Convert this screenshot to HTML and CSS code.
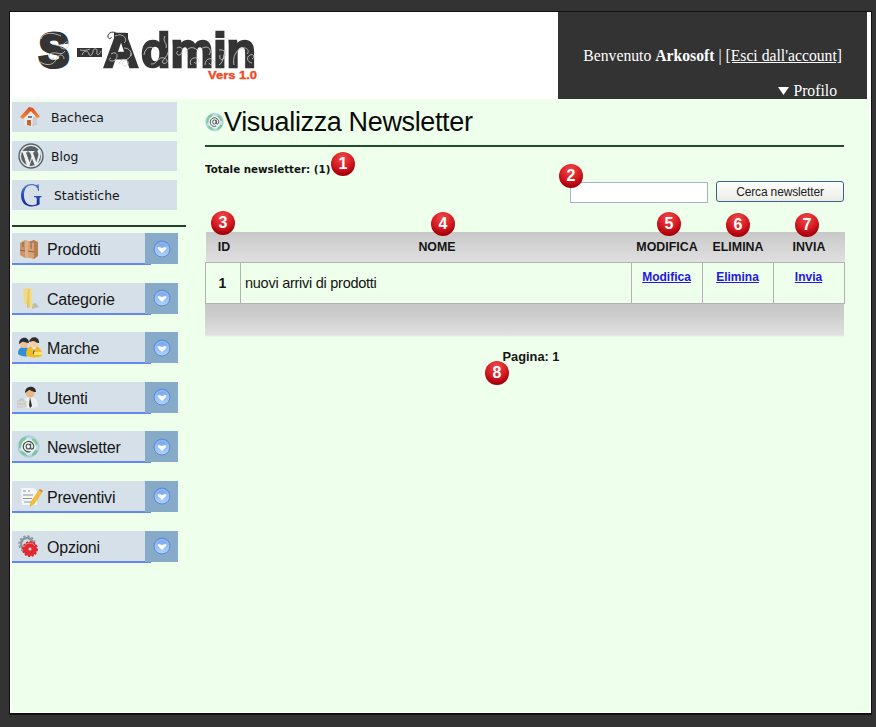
FILE: index.html
```html
<!DOCTYPE html>
<html lang="it">
<head>
<meta charset="utf-8">
<title>S-Admin</title>
<link rel="stylesheet" href="styles.css">
</head>
<body>
<svg width="0" height="0" class="defs" aria-hidden="true">
  <defs>
    <linearGradient id="orb" x1="0" y1="0" x2="0" y2="1"><stop offset="0" stop-color="#6f9ee8"/><stop offset="1" stop-color="#b4d8fa"/></linearGradient>
    <linearGradient id="roof" x1="0" y1="0" x2="0" y2="1"><stop offset="0" stop-color="#d94917"/><stop offset="1" stop-color="#ff8a3a"/></linearGradient>
    <linearGradient id="gold" x1="0" y1="0" x2="1" y2="0"><stop offset="0" stop-color="#d9b550"/><stop offset=".5" stop-color="#f6e290"/><stop offset="1" stop-color="#d9b64c"/></linearGradient>
    <linearGradient id="gblue" x1="0" y1="0" x2="0" y2="1"><stop offset="0" stop-color="#5478cc"/><stop offset="1" stop-color="#0c249c"/></linearGradient>
    <radialGradient id="globe"><stop offset="0" stop-color="#fff"/><stop offset=".55" stop-color="#e2f1f0"/><stop offset="1" stop-color="#a5d0de"/></radialGradient>
    <symbol id="drop" viewBox="0 0 18 18"><circle cx="9" cy="9" r="8" fill="url(#orb)" stroke="#5c8bd2" stroke-width="1"/><circle cx="9" cy="9" r="6.300" fill="none" stroke="#a3c8f5" stroke-width=".8"/><path d="M4.700 7.300h2.200l2.100 1 2.100-1h2.200v1.500L9 13 4.700 8.800z" fill="#fff"/></symbol>
    <symbol id="mail" viewBox="0 0 22 22"><circle cx="11" cy="11" r="10.2" fill="url(#globe)" stroke="#a1c9d8" stroke-width=".7"/><path d="M2 8C3 4 6 2 9 2l-1 3-3 2-1 5-2 1zM15 3c3 1 4 3 5 6l-2 1-2-3-2-2zM3 15l4 1 3 4c-4 0-6-2-7-5zM18 14l2 1c-1 3-3 4-6 5l1-3z" fill="#62b870" opacity=".65"/><circle cx="11" cy="11" r="6.800" fill="#f2f8f6" opacity=".85"/><path d="M13 8.300v4c0 2 3 1.400 3-1.400a5 5 0 1 0-3 4.800M13 11a2.100 2.400 0 1 1-4.200 0 2.100 2.400 0 1 1 4.200 0" fill="none" stroke="#424c4d" stroke-width="1.100"/></symbol>
  </defs>
</svg>
<div class="frame">
  <header class="top">
    <svg class="logo" width="240" height="72" viewBox="28 12 240 72">
      <g class="logo-word">
        <text class="heavy" x="39" y="66.500" textLength="30" lengthAdjust="spacingAndGlyphs">S</text>
        <text x="103.500" y="67" textLength="35" lengthAdjust="spacingAndGlyphs">A</text>
        <text x="141" y="67" textLength="115" lengthAdjust="spacingAndGlyphs">dmin</text>
      </g>
      <path d="M77 48h25v9H77z M114 33h14v6h-14z" fill="#343434"/>
      <g class="swirl">
        <path d="M41 39c2-7 12-7 20-3M40 62c8 5 15 2 16-3M52 44c5 1 9 3 13-1s5 3 2 5-7 0-7-2M54 58c-5 3-7-4-2-5s10 3 13-2M56 60c2-7 8-6 8-1"/>
        <path d="M82 55c2-5 6-5 7-1s4 0 4-3 5-3 4 1 3 3 4-1M80 50c4 1 7 0 10-1"/>
        <path d="M115 36c7-4 14 3 9 7M111 54c6-4 8 3 4 6s-8-1-4-2M119 64c2-8 11-4 9 0s-8 1-5-2 8-3 8-9M124 48c6 0 8 5 7 8"/>
        <path d="M144 55c1-9 9-10 12-4M151 64c6 1 7-8 13-6s2 7-1 5 5-6 5-11M165 36c-3 6 3 7 1 12"/>
        <path d="M177 48c5-3 7 3 4 6s-6-1-3-3M185 53c3-6 8-7 12-3M191 65c-3-6 4-9 7-6s-2 6-4 3M201 49c7-5 12 1 8 6M205 65c0-7 7-8 9-4s-4 5-5 2"/>
        <path d="M219 50c6-1 8 4 5 8s-5 0-4-3M219 65c6-4 3-10 7-14M234 65c-2-8 3-16 8-17s8 3 5 6M252 63c-5-1-6-6-2-8s5 3 2 4"/>
      </g>
      <path class="curl" d="M118 35c-3-5-11-3-10 2 1 3 4 1 3 0"/>
      <text class="logo-version" x="208" y="79" textLength="49" lengthAdjust="spacingAndGlyphs">Vers 1.0</text>
    </svg>
    <div class="account">
      <div class="welcome">Benvenuto <b>Arkosoft</b> | <a href="#">[Esci dall'account]</a></div>
      <div class="profile"><svg width="11" height="8"><path d="M0 0h11L5.500 8z" fill="#fff"/></svg>Profilo</div>
    </div>
  </header>
  <div class="body">
    <nav class="side">
      <a class="quick"><svg width="24" height="24" viewBox="0 0 24 24"><path d="M6 12l6-7 7 7v9l-5 1-7-2z" fill="#e9ebee"/><path d="M15 12l4-1v9l-5 2z" fill="#c9cdd3"/><path d="M2 12 11 2l4 1 7 9-3 1-6-7-8 8z" fill="url(#roof)"/><path d="M9 15h4v6l-4-1z" fill="#c8642e"/><path d="M10 11h4v2h-4z" fill="#75808a"/></svg><span>Bacheca</span></a>
      <a class="quick blog"><svg width="26" height="26" viewBox="0 0 26 26"><circle cx="13" cy="13" r="12" fill="#e1e4e5" stroke="#59646a" stroke-width="1.4"/><circle cx="13" cy="13" r="10" fill="#566167"/><path d="M3.500 8h6v1.200L8 9.400l3.600 10 1.900-5.800-1.500-4-1.500-.3V8h6v1.200l-1.600.3 3.400 9.700 2-6.500c.8-3-1.400-3.300-.8-5 .4-1.200 2-1.200 2.500-.5 2 5-1 9-2.700 14.600L17 23l-3-7.500L11 24l-2-1L4.700 9.400l-1.500-.2z" fill="#eef0f0"/></svg><span>Blog</span></a>
      <a class="quick stats"><svg width="22" height="25" viewBox="0 0 22 25"><path d="M19 8h-.8C17.500 4 15 2.300 11.500 2.300 6.500 2.300 4 6.500 4 12.200c0 6 3 10 8 10 2 0 3.500-.5 4.700-1.300V16c0-1.500-.5-1.900-2.700-2.100v-.9h7.500v.9c-1.600.2-1.900.6-1.900 2v5.300c-2.200 1.300-5 2.200-8 2.200C5 23.400 1 19 1 12.500 1 5.500 5.500 1 11.500 1c2.300 0 4 .7 5.200 1.100.7.200 1.100 0 1.300-1h.7z" fill="url(#gblue)"/></svg><span>Statistiche</span></a>
      <hr class="side-line">
      <div class="menu">
        <a class="item"><svg class="pic" width="24" height="24" viewBox="0 0 24 24"><path d="M3 6l5-3 5 2v15l-5 1-5-3z" fill="#c9956a"/><path d="M8 3l5 2v15l-5 1z" fill="#dfb18a"/><path d="M11 5l6-2 4 2v14l-4 3-6-2z" fill="#b97d52"/><path d="M11 5l6 1v16l-6-2z" fill="#d6a277"/><path d="M6 5v5M14 5v7M3 13l5 1M11 14l6 1" stroke="#83502f" stroke-width=".8"/></svg><span>Prodotti</span><i class="arrow"><svg width="18" height="18"><use href="#drop"/></svg></i></a>
        <a class="item"><svg class="pic" width="24" height="24" viewBox="0 0 24 24"><path d="M15 17l4-1 3 4-7 2z" fill="#b6bfc3"/><path d="M6 2l5-1 2 1v17l-6-3z" fill="#f0d985"/><path d="M11 2l4 0v14l3 3-8 2z" fill="url(#gold)"/></svg><span>Categorie</span><i class="arrow"><svg width="18" height="18"><use href="#drop"/></svg></i></a>
        <a class="item"><svg class="pic" width="26" height="24" viewBox="0 0 26 24"><path d="M1 18c0-6 3-7 6-7s7 2 7 8c-3 2-10 2-13-1z" fill="#328fd5"/><circle cx="7" cy="8" r="4" fill="#f0c197"/><path d="M2 8c0-8 10-8 10-1-3 0-5-2-7-1z" fill="#252b31"/><path d="M9 19c0-7 3-9 8-9s8 3 8 10c-4 2-13 2-16-1z" fill="#f2bb26"/><path d="M15 10h4l-2 7z" fill="#fff"/><path d="M17 12l1 6h-2z" fill="#343434"/><circle cx="17" cy="7" r="4.500" fill="#f5ceaa"/><path d="M12 6c1-7 11-6 10 1-3 0-4-2-6-2z" fill="#303030"/><path d="M17 16h8v3h-8z" fill="#ffe26a"/></svg><span>Marche</span><i class="arrow"><svg width="18" height="18"><use href="#drop"/></svg></i></a>
        <a class="item"><svg class="pic" width="26" height="24" viewBox="0 0 26 24"><path d="M6 21c0-7 3-10 8-10s7 4 7 9c-3 2-12 3-15 1z" fill="#edf0f1"/><path d="M13 11l2 9-2 2-1-3z" fill="#333"/><circle cx="13" cy="7" r="4.500" fill="#e9b789"/><path d="M8 7c0-8 11-8 11-1-4 0-5-2-7-2z" fill="#2a2a2a"/><path d="M0 15h9v6H0z" fill="#dcdcd2" stroke="#b9bbb6" stroke-width=".6"/><path d="M3 15v-2h3v2M1 18h7" fill="none" stroke="#aaa" stroke-width=".7"/></svg><span>Utenti</span><i class="arrow"><svg width="18" height="18"><use href="#drop"/></svg></i></a>
        <a class="item"><svg class="pic" width="23" height="23"><use href="#mail"/></svg><span>Newsletter</span><i class="arrow"><svg width="18" height="18"><use href="#drop"/></svg></i></a>
        <a class="item"><svg class="pic" width="26" height="24" viewBox="0 0 26 24"><path d="M4 3h13l3 3v14H5z" fill="#f3f5f6"/><path d="M6 6h3M11 6h2M6 10h10M6 13.500h9M7 17h9" stroke="#8e9599" stroke-width="1"/><path d="M22 5l3 2-8 12-4 2 1-4z" fill="#f5c32d" stroke="#c8951d" stroke-width=".4"/><path d="M22 5l1-1 3 2-1 1z" fill="#df704d"/></svg><span>Preventivi</span><i class="arrow"><svg width="18" height="18"><use href="#drop"/></svg></i></a>
        <a class="item"><svg class="pic" width="24" height="24" viewBox="0 0 24 24"><circle cx="10" cy="9" r="6" fill="none" stroke="#89979e" stroke-width="2.500"/><circle cx="10" cy="9" r="8" fill="none" stroke="#89979e" stroke-width="1.500" stroke-dasharray="2.300 1.900"/><circle cx="13" cy="14" r="7" fill="#e32932"/><circle cx="13" cy="14" r="7" fill="none" stroke="#d62731" stroke-width="2" stroke-dasharray="2 1.600"/><path d="M7 12c2-5 9-5 11-1" fill="none" stroke="#ff7c7c" stroke-width="1"/><circle cx="13" cy="14" r="1.500" fill="#ffdcdc"/></svg><span>Opzioni</span><i class="arrow"><svg width="18" height="18"><use href="#drop"/></svg></i></a>
      </div>
    </nav>
    <main class="content">
      <h1><svg width="19" height="20"><use href="#mail"/></svg>Visualizza Newsletter</h1>
      <p class="total">Totale newsletter: (1)</p>
      <form class="search"><input type="text" aria-label="Cerca"><button type="button">Cerca newsletter</button></form>
      <table>
        <colgroup><col class="c-id"><col class="c-name"><col class="c-act"><col class="c-act"><col class="c-act"></colgroup>
        <thead><tr><th>ID</th><th>NOME</th><th>MODIFICA</th><th>ELIMINA</th><th>INVIA</th></tr></thead>
        <tbody><tr><td class="id">1</td><td class="name">nuovi arrivi di prodotti</td><td><a href="#">Modifica</a></td><td><a href="#">Elimina</a></td><td><a href="#">Invia</a></td></tr></tbody>
      </table>
      <div class="table-foot"></div>
      <p class="pager">Pagina: 1</p>
    </main>
  </div>
</div>
<b class="badge b1">1</b><b class="badge b2">2</b><b class="badge b3">3</b><b class="badge b4">4</b><b class="badge b5">5</b><b class="badge b6">6</b><b class="badge b7">7</b><b class="badge b8">8</b>
</body>
</html>
```
FILE: styles.css
```css
* { box-sizing: border-box; }
html, body { margin: 0; height: 727px; overflow: hidden; }
body { position: relative; background: #333; padding: 11px 0 0 9px; font-family: "Liberation Sans", Arial, sans-serif; color: #151515; }
.defs { position: absolute; }
.frame { width: 863px; height: 704px; border: 1px solid #111; border-bottom-width: 2px; background: #fff; display: flex; flex-direction: column; }
.top { height: 87px; flex: none; display: flex; justify-content: space-between; padding: 0 4px 0 18px; }
.logo-word { font: bold 48px "Liberation Sans", Arial, sans-serif; fill: #343434; stroke: #343434; stroke-width: 2.4px; }
.logo-word .heavy { stroke-width: 4px; }
.logo-version { font: bold 11.500px "Liberation Sans", Arial, sans-serif; fill: #f04a25; stroke: #f04a25; stroke-width: .4px; }
.swirl { fill: none; stroke: #d0d0d0; stroke-width: .8px; }
.curl { fill: none; stroke: #343434; stroke-width: 1px; }
.account { width: 309px; background: #333; color: #fff; font: 15.700px/18px "Liberation Serif", "Times New Roman", serif; padding: 35px 25px 0 0; text-align: right; white-space: nowrap; }
.account a { color: #fff; }
.profile { display: flex; justify-content: flex-end; align-items: center; gap: 4px; margin-top: 17px; padding-right: 5px; }
.body { flex: 1; display: flex; margin: 0 1px 1px 2px; background: #eeffeb; }
.side { width: 193px; padding-top: 3px; }
.quick { display: flex; align-items: center; width: 165px; height: 30px; margin-bottom: 9px; padding-left: 6px; gap: 9px; background: #d6e0e9; font: 12.400px "DejaVu Sans", Verdana, sans-serif; }
.blog { gap: 7px; }
.stats { padding-left: 8px; gap: 12px; }
.side-line { width: 174px; height: 2px; margin: 15px 0 6px; border: 0; background: #263e2d; }
.menu { display: flex; flex-direction: column; gap: 17.600px; }
.item { display: flex; align-items: flex-start; width: 166px; height: 32px; font-size: 16px; letter-spacing: -.2px; line-height: 33px; background: linear-gradient(#d6e0e9, #d6e0e9) 0 0 / 139px 30px no-repeat, linear-gradient(#6389f0, #6389f0) 0 30px / 139px 2px no-repeat; }
.item .pic { flex: none; margin: 4px 0 0 5px; }
.item span { width: 98px; margin-left: auto; }
.arrow { display: flex; align-items: center; justify-content: center; width: 33px; height: 31px; background: #86aac8; }
.content { width: 639px; }
h1 { display: flex; align-items: center; height: 48px; margin: 0; border-bottom: 2px solid #204d30; font-size: 27px; letter-spacing: -.36px; font-weight: normal; line-height: 46px; color: #0b0b0b; }
.total { margin: 15px 0 0; height: 15px; font: bold 10.300px/14px "DejaVu Sans", Verdana, sans-serif; }
.search { display: flex; justify-content: flex-end; gap: 8px; height: 22px; margin-top: 4px; }
.search input { width: 138px; height: 21px; margin-top: 1px; padding: 0; border: 1px solid #a3b5cc; background: #fff; }
.search button { width: 128px; height: 21px; padding: 0; border: 1px solid #3c6287; border-radius: 3px; background: linear-gradient(#fdfdfc, #ededE7); font: 12px/18px "Liberation Sans", Arial, sans-serif; letter-spacing: -.15px; color: #222; }
table { width: 639px; margin-top: 29px; border-collapse: collapse; table-layout: fixed; }
.c-id { width: 35px; }
.c-name { width: 391px; }
.c-act { width: 71px; }
thead { background: linear-gradient(#c8c8c8, #e0e0e0); }
th { height: 30px; padding: 0; font-size: 12.400px; line-height: 14px; }
th:first-child, th:nth-child(2) { padding-left: 2px; }
td { height: 41px; padding: 7px 1px 0 0; border: 1px solid #b2b2b2; text-align: center; vertical-align: top; font-size: 12px; line-height: 14px; font-weight: bold; }
td a { color: #2416e8; }
td.id { font-size: 14px; padding-top: 13px; }
td.name { text-align: left; font-weight: normal; font-size: 14.500px; letter-spacing: -.26px; padding: 13px 0 0 4px; }
.table-foot { height: 33px; background: linear-gradient(#c7c7c7, #cdcdcd 35%, #e1e1e1 94%, #eeffeb); }
.pager { margin: 12px 0 0; padding-left: 13px; text-align: center; font-size: 12.800px; line-height: 16px; font-weight: bold; }
.badge { position: absolute; width: 24px; height: 24px; border-radius: 50%; background: radial-gradient(circle at 48% 25%, #ef4b4b, #d51a22 48%, #a9000b 75%, #830007); color: #fff; font: bold 16px/24px "Liberation Sans", Arial, sans-serif; text-align: center; }
.b1 { left: 331px; top: 152px; }
.b2 { left: 559px; top: 164px; }
.b3 { left: 211px; top: 211px; }
.b4 { left: 431px; top: 212px; }
.b5 { left: 657px; top: 212px; }
.b6 { left: 726px; top: 213px; }
.b7 { left: 795px; top: 213px; }
.b8 { left: 485px; top: 361px; }
```
